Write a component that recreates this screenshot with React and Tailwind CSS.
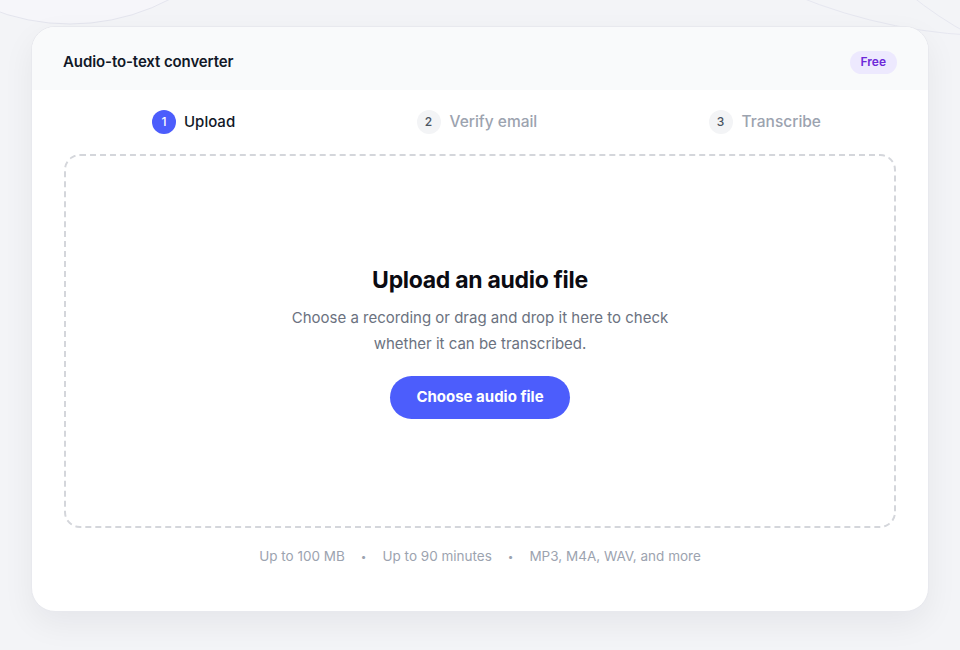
import React from "react";

export default function App() {
  return (
    <div
      className="relative w-[960px] h-[650px] overflow-hidden bg-[#f3f4f7] px-[31px] pt-[26px]"
      style={{ fontFamily: "Inter, 'Noto Sans', sans-serif" }}
    >
      <svg className="absolute left-0 top-0 pointer-events-none" width="960" height="650" viewBox="0 0 960 650" fill="none">
        <circle cx="70" cy="-190" r="214" fill="#f6f6fa" stroke="#e4e5ee" strokeWidth="1" />
        <circle cx="1000" cy="-500" r="536" stroke="#e6e7f0" strokeWidth="1" />
        <circle cx="1150" cy="-300" r="380" stroke="#e6e7f0" strokeWidth="1" />
      </svg>
      <div className="relative w-[898px] h-[586px] rounded-[24px] bg-white border border-[#e8e9ee] shadow-[0_12px_32px_rgba(17,24,39,0.06)] overflow-hidden">
        <div className="h-[63px] bg-[#f9fafb] flex items-center justify-between px-[31px] pt-[7px]">
          <div className="text-[15px] font-semibold text-[#111827] tracking-[-0.1px]">Audio-to-text converter</div>
          <div className="h-[23px] px-[11px] rounded-full bg-[#ede9fe] text-[#6d28d9] text-[12px] font-semibold flex items-center">Free</div>
        </div>
        <div className="flex items-center justify-between pl-[120px] pr-[107px] h-[64px]">
          <div className="flex items-center gap-[8px]">
            <div className="w-[24px] h-[24px] rounded-full bg-[#4c5dfc] text-white text-[12px] font-medium flex items-center justify-center">1</div>
            <div className="text-[15px] font-medium text-[#111827]">Upload</div>
          </div>
          <div className="flex items-center gap-[9px] ml-[10px]">
            <div className="w-[24px] h-[24px] rounded-full bg-[#f3f4f6] text-[#4b5563] text-[12px] font-medium flex items-center justify-center">2</div>
            <div className="text-[15.5px] font-medium text-[#9ca3af]">Verify email</div>
          </div>
          <div className="flex items-center gap-[9px]">
            <div className="w-[24px] h-[24px] rounded-full bg-[#f3f4f6] text-[#4b5563] text-[12px] font-medium flex items-center justify-center">3</div>
            <div className="text-[15.5px] font-medium text-[#9ca3af]">Transcribe</div>
          </div>
        </div>
        <div className="mx-[32px] h-[374px] rounded-[16px] border-2 border-dashed border-[#d4d6db] flex flex-col items-center justify-center">
          <div className="text-[23px] font-bold text-[#0b0b12] tracking-[-0.3px] leading-[30px] mt-[2px]">Upload an audio file</div>
          <div className="mt-[10px] text-[15px] leading-[26px] text-[#6b7280] text-center w-[420px]">
            Choose a recording or drag and drop it here to check whether it can be transcribed.
          </div>
          <button className="mt-[19px] w-[180px] h-[43px] rounded-full bg-[#4c5dfc] text-white text-[15px] font-bold">Choose audio file</button>
        </div>
        <div className="mt-[18px] flex items-center justify-center gap-[16px] text-[13.5px] text-[#9ca3af]">
          <span>Up to 100 MB</span>
          <span className="text-[10px]">•</span>
          <span>Up to 90 minutes</span>
          <span className="text-[10px]">•</span>
          <span>MP3, M4A, WAV, and more</span>
        </div>
      </div>
    </div>
  );
}
